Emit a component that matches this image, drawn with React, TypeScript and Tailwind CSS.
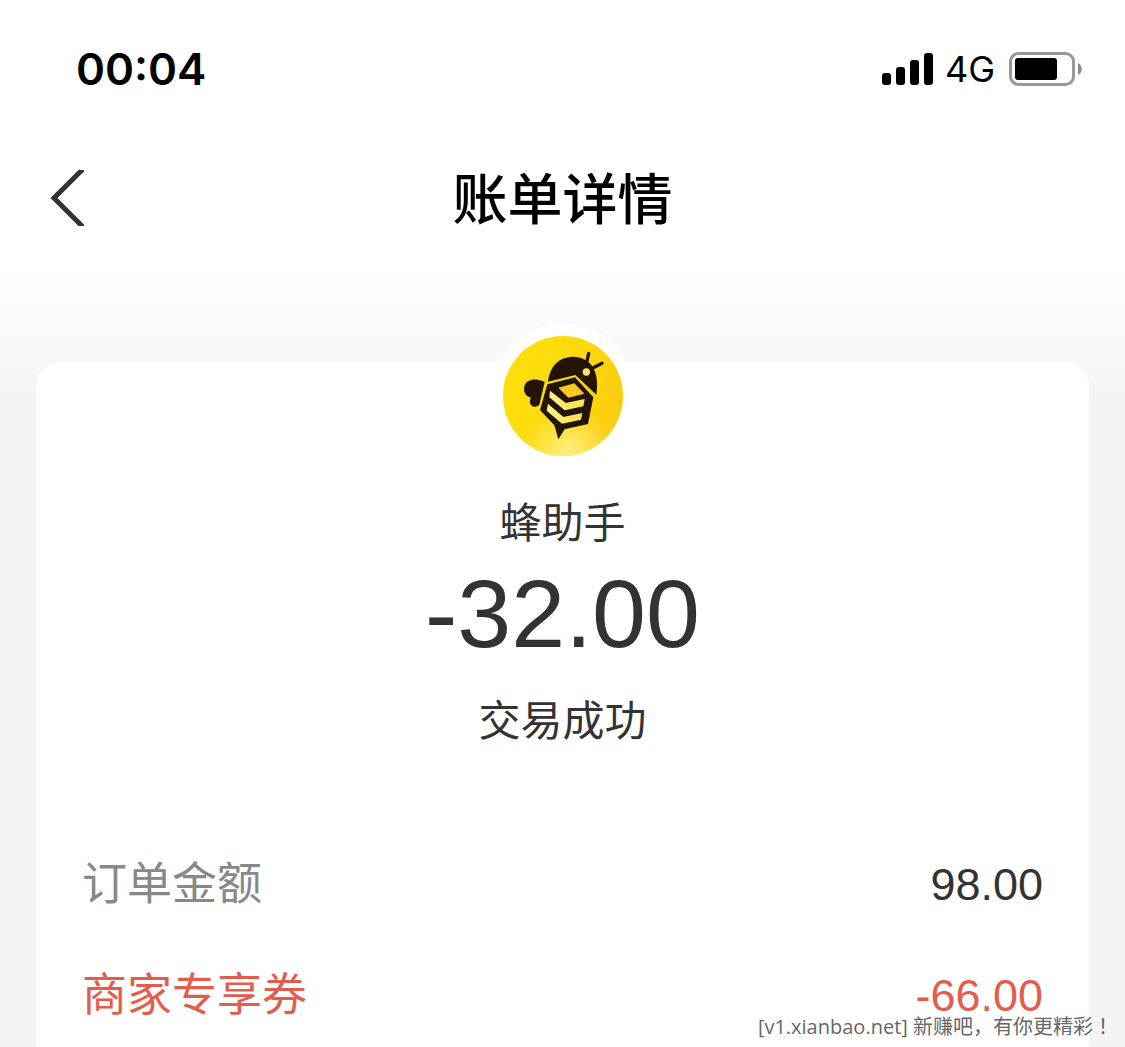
import React from "react";

const sans = "font-['Liberation_Sans','Noto_Sans_CJK_SC',sans-serif]";

function StatusBar() {
  return (
    <div className="flex h-[132px] items-center justify-between pt-1.5 pr-[42px] pl-[76px] font-['Inter',sans-serif] text-black">
      <span className="text-[44px] leading-none font-semibold">00:04</span>
      <div className="flex items-center">
        <svg className="mr-3" width="51" height="32" viewBox="0 0 51 32" aria-label="Signal">
          <rect x="0" y="20" width="9" height="12" rx="3" />
          <rect x="14" y="14" width="9" height="18" rx="3" />
          <rect x="28" y="7" width="9" height="25" rx="3" />
          <rect x="42" y="0" width="9" height="32" rx="3" />
        </svg>
        <span className="mr-3.5 text-[36px] leading-none">4G</span>
        <svg width="74" height="34" viewBox="0 0 74 34" aria-label="Battery">
          <rect x="1.5" y="1.5" width="63" height="31" rx="8" fill="none" stroke="#999" strokeWidth="3" />
          <rect x="6" y="6" width="42" height="22" rx="3" />
          <path d="M69 11C74 13 74 21 69 23Z" fill="#8a8a8a" />
        </svg>
      </div>
    </div>
  );
}

function BeeLogo() {
  return (
    <svg className="size-[120px]" viewBox="69 78 360 360" aria-label="蜂助手">
      <defs>
        <linearGradient id="disc" x1="0" x2="1" y1="0.3" y2="0.6">
          <stop offset="0" stopColor="#fce00a" />
          <stop offset="0.6" stopColor="#fcd80c" />
          <stop offset="1" stopColor="#fbcc11" />
        </linearGradient>
        <radialGradient id="glow" cx="0.55" cy="1" r="0.4">
          <stop offset="0" stopColor="#fdf089" />
          <stop offset="1" stopColor="#fdf089" stopOpacity="0" />
        </radialGradient>
        <linearGradient id="stripe" x1="0" x2="1">
          <stop offset="0" stopColor="#fdf08a" />
          <stop offset="1" stopColor="#fbe04a" />
        </linearGradient>
      </defs>
      <circle cx="249" cy="258" r="180" fill="url(#disc)" />
      <circle cx="249" cy="258" r="180" fill="url(#glow)" />
      <g fill="#241406">
        <path d="M204 215C210 165 240 139 284 140C332 144 360 182 349 254L286 195Z" />
        <path d="M194 216C172 204 134 204 132 236C132 252 142 262 153 262C146 275 150 288 162 290C170 291 175 287 178 284Z" />
        <path d="M202 223L285 202L340 262L324 342L254 358L235 388L223 346L180 300Z" />
        <path d="M326 130L319 162M366 160L334 176" stroke="#241406" strokeWidth="10" strokeLinecap="round" />
      </g>
      <circle cx="319" cy="186" r="11" fill="#fbe36a" />
      <path d="M235 233L283 220L313 251L265 263Z" fill="#fcc91c" />
      <g fill="url(#stripe)">
        <path d="M210 242L257 279L314 267L310 289L254 301L208 262Z" />
        <path d="M204 281L250 321L307 309L303 329L246 341L200 302Z" />
      </g>
    </svg>
  );
}

function Row({ label, value, tone }: { label: string; value: string; tone?: "coupon" }) {
  const coupon = tone === "coupon";
  return (
    <div className="flex h-[111px] items-center justify-between text-[45px] leading-none">
      <dt className={coupon ? "text-[#e35d4c]" : "text-[#888]"}>{label}</dt>
      <dd className={coupon ? "text-[#e35d4c]" : "text-[#333]"}>{value}</dd>
    </div>
  );
}

export default function App() {
  return (
    <div className={`relative flex min-h-screen flex-col bg-white ${sans}`}>
      <StatusBar />
      <header className="grid h-[132px] grid-cols-[1fr_auto_1fr] items-center px-[50px]">
        <button aria-label="返回" className="justify-self-start">
          <svg width="34" height="56" viewBox="0 0 34 56" fill="none" stroke="#333" strokeWidth="5">
            <path d="M34 -2L4 28L34 58" />
          </svg>
        </button>
        <h1 className="pt-1 text-[55px] leading-none font-medium text-black">账单详情</h1>
      </header>
      <main className="flex flex-1 flex-col bg-[#f4f4f4] bg-linear-to-b from-white to-[#f4f4f4] to-[140px] px-9 pt-[98px]">
        <section className="flex flex-1 flex-col rounded-t-3xl bg-white px-[46px]">
          <div className="-mt-[38px] flex flex-col items-center text-[#333]">
            <div className="rounded-full bg-white p-3">
              <BeeLogo />
            </div>
            <h2 className="mt-[26px] text-[42px] leading-[60px]">蜂助手</h2>
            <p className="mt-1.5 text-[97px] leading-[108px]">-32.00</p>
            <p className="mt-6 text-[42px] leading-[60px]">交易成功</p>
          </div>
          <dl className="mt-[77px]">
            <Row label="订单金额" value="98.00" />
            <Row label="商家专享券" value="-66.00" tone="coupon" />
          </dl>
        </section>
      </main>
      <p className="absolute right-3 bottom-3.5 font-['Open_Sans','Noto_Sans_CJK_SC',sans-serif] text-[20px] leading-5 text-[#666]">
        [v1.xianbao.net] 新赚吧，有你更精彩
        <span className="font-['Noto_Sans_CJK_TC',sans-serif]" lang="zh-Hant">！</span>
      </p>
    </div>
  );
}
